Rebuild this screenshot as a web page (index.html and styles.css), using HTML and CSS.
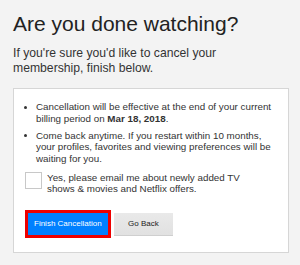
FILE: index.html
```html
<!DOCTYPE html>
<html lang="en">
<head>
    <meta charset="UTF-8">
    <meta name="viewport" content="width=device-width, initial-scale=1.0">
    <title>Cancel Membership</title>
    <link rel="stylesheet" href="styles.css">
</head>
<body>
    <div class="page">
        <h1 class="title">Are you done watching?</h1>
        <p class="lead">If you're sure you'd like to cancel your membership, finish below.</p>

        <div class="card">
            <ul class="notes">
                <li><span>Cancellation will be effective at the end of your current billing period on <b>Mar 18, 2018</b>.</span></li>
                <li><span>Come back anytime. If you restart within 10 months, your profiles, favorites and viewing preferences will be waiting for you.</span></li>
            </ul>

            <label class="optin">
                <input type="checkbox" class="optin-check">
                <span class="optin-text">Yes, please email me about newly added TV shows &amp; movies and Netflix offers.</span>
            </label>

            <div class="actions">
                <button class="btn btn-primary">Finish Cancellation</button>
                <button class="btn btn-secondary">Go Back</button>
            </div>
        </div>
    </div>
</body>
</html>
```

FILE: styles.css
```css
body {
    background-color: #f3f3f3;
    color: #333;
    font-family: "Liberation Sans", Arial, sans-serif;
    margin: 0;
}
.page {
    padding: 0 11px 0 13px;
}
.title {
    font-size: 21px;
    line-height: 24px;
    font-weight: normal;
    color: #222;
    margin: 12px 0 0;
}
.lead {
    font-size: 12.2px;
    line-height: 15px;
    margin: 10px 0 0;
    max-width: 250px;
}

/* Card */
.card {
    background-color: #fff;
    border: 1px solid #d6d6d6;
    margin-top: 12px;
    padding: 12px 12px 17px 11px;
}
.notes {
    list-style: none;
    margin: 0;
    padding: 0;
    font-size: 9.8px;
    line-height: 11.5px;
}
.notes li {
    display: flex;
}
.notes li + li {
    margin-top: 5.5px;
}
.notes li::before {
    content: "";
    flex: none;
    width: 3px;
    height: 3px;
    border-radius: 50%;
    background-color: #333;
    margin: 4.5px 9px 0 -1px;
}
.optin {
    display: flex;
    margin-top: 8px;
    font-size: 9.8px;
    line-height: 11px;
}
.optin-check {
    appearance: none;
    flex: none;
    width: 17px;
    height: 17px;
    margin: 0 5px 0 0;
    border: 1px solid #c8c8c8;
    background-color: #fff;
}
.optin-text {
    max-width: 215px;
}

/* Buttons */
.actions {
    display: flex;
    margin-top: 18.5px;
    padding-left: 3px;
}
.btn {
    height: 22px;
    border: none;
    font-family: "Liberation Sans", Arial, sans-serif;
    font-size: 8px;
    cursor: pointer;
}
.btn-primary {
    background-color: #0080ff;
    color: #fff;
    padding: 0 6px;
    outline: 3px solid #ee0000;
}
.btn-secondary {
    background: linear-gradient(#e9e9e9, #e1e1e1);
    color: #222;
    padding: 0 14.5px;
    margin-left: 6px;
    box-shadow: 0 1px 0 #cfcfcf;
}
```
